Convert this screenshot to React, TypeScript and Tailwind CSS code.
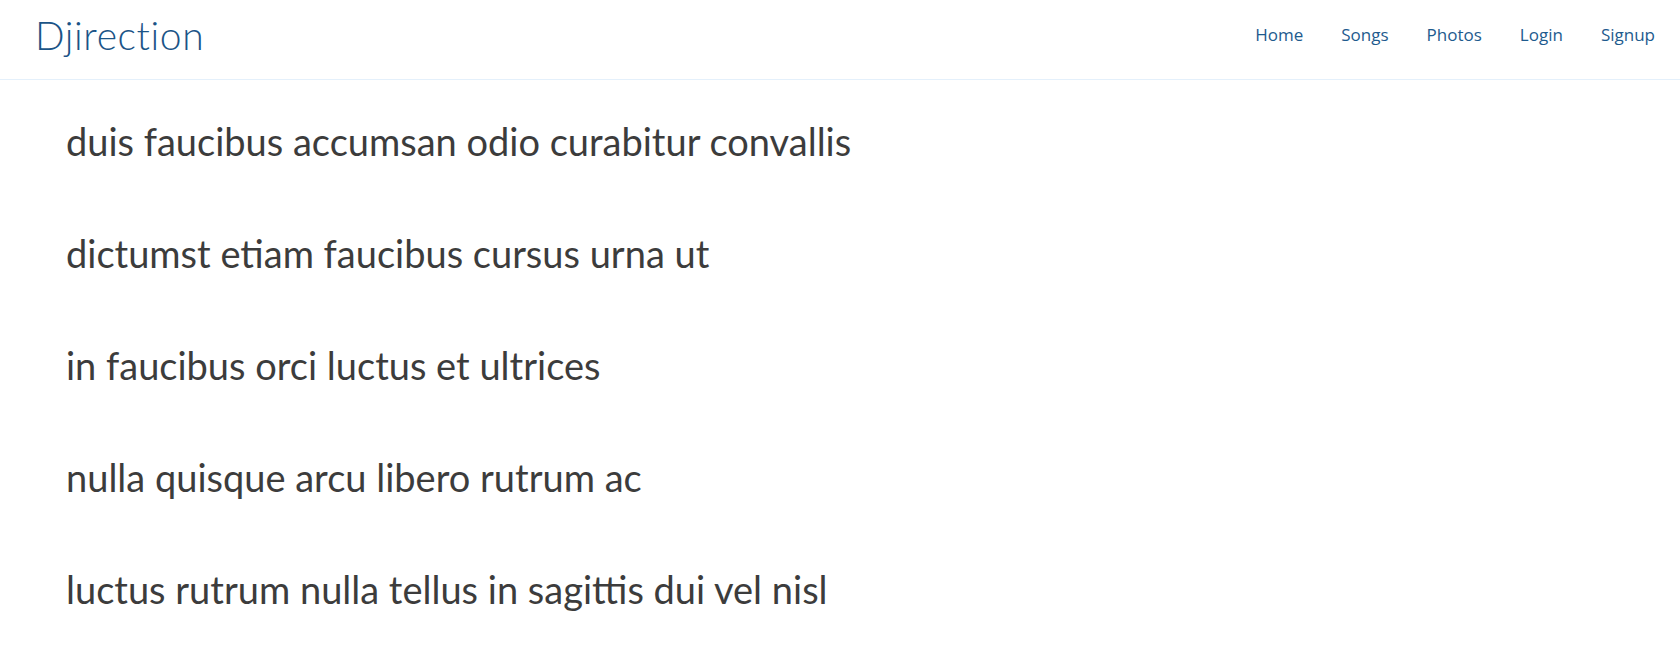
const links = ["Home", "Songs", "Photos", "Login", "Signup"]

const lines = [
  "duis faucibus accumsan odio curabitur convallis",
  "dictumst etiam faucibus cursus urna ut",
  "in faucibus orci luctus et ultrices",
  "nulla quisque arcu libero rutrum ac",
  "luctus rutrum nulla tellus in sagittis dui vel nisl",
]

export default function App() {
  return (
    <div className="min-h-screen bg-white">
      <header className="flex h-20 items-center justify-between border-b border-[#e4f0fb] pb-[9px] pl-[35px] pr-[25px]">
        <a href="#" className="font-['Lato',sans-serif] text-[39px] font-light tracking-[0.6px] text-[#1b5487]">
          Djirection
        </a>
        <nav className="flex items-center gap-[38px] font-['Open_Sans',sans-serif] text-[17px] text-[#1e5b8e]">
          {links.map((link) => (
            <a key={link} href="#">
              {link}
            </a>
          ))}
        </nav>
      </header>

      <main className="flex flex-col gap-[68px] px-[66px] pt-[39px]">
        {lines.map((line) => (
          <p key={line} className="font-['Lato',sans-serif] text-[38px] leading-[44px] text-[#3c3c3c]">
            {line}
          </p>
        ))}
      </main>
    </div>
  )
}
